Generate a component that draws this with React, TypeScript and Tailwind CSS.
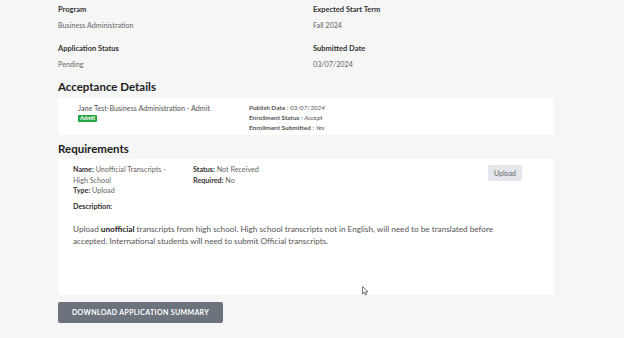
import React from "react";

const font = { fontFamily: "Lato, 'Noto Sans', sans-serif" };

function Field({ label, value }: { label: string; value: string }) {
  return (
    <div className="flex flex-col">
      <div className="text-[7.5px] font-bold leading-[10px] text-[#333]">{label}</div>
      <div className="mt-[6px] text-[7.2px] leading-[10px] text-[#666]">{value}</div>
    </div>
  );
}

export default function App() {
  return (
    <div className="relative w-[624px] h-[338px] bg-[#f6f6f6] overflow-hidden" style={font}>
      <div className="pl-[58px] pr-[70px] pt-[5px]">
        <div className="grid grid-cols-[255px_1fr] gap-y-[13px]">
          <Field label="Program" value="Business Administration" />
          <Field label="Expected Start Term" value="Fall 2024" />
          <Field label="Application Status" value="Pending" />
          <Field label="Submitted Date" value="03/07/2024" />
        </div>

        <h2 className="mt-[10px] text-[11.5px] font-bold leading-[14px] text-[#222]">Acceptance Details</h2>
        <div className="mt-[4px] bg-white w-[496px] h-[37px] flex pl-[20px] pt-[6px]">
          <div className="w-[171px]">
            <div className="text-[7.2px] leading-[10px] text-[#555]">Jane Test-Business Administration - Admit</div>
            <div className="w-fit mt-[1px] bg-[#28a745] text-white text-[5.5px] font-bold leading-[7px] px-[2px] rounded-[1px]">Admit</div>
          </div>
          <div className="-mt-[1px] text-[6.4px] leading-[10px] text-[#555]">
            <div><span className="font-bold">Publish Date</span> : <span className="italic">03/07/2024</span></div>
            <div><span className="font-bold">Enrollment Status</span> : <span className="italic">Accept</span></div>
            <div><span className="font-bold">Enrollment Submitted</span> : <span className="italic">Yes</span></div>
          </div>
        </div>

        <h2 className="mt-[7px] text-[11.5px] font-bold leading-[14px] text-[#222]">Requirements</h2>
        <div className="mt-[3px] bg-white w-[496px] h-[136px] pl-[15px] pr-[32px] pt-[6px]">
          <div className="flex">
            <div className="w-[120px] text-[7.2px] leading-[10.5px] text-[#666]">
              <div><span className="font-bold text-[#333]">Name:</span> Unofficial Transcripts -</div>
              <div>High School</div>
              <div><span className="font-bold text-[#333]">Type:</span> Upload</div>
            </div>
            <div className="flex-1 text-[7.2px] leading-[10.5px] text-[#666]">
              <div><span className="font-bold text-[#333]">Status:</span> Not Received</div>
              <div><span className="font-bold text-[#333]">Required:</span> No</div>
            </div>
            <div className="bg-[#e4e7eb] text-[#666] text-[7px] leading-[16px] h-[16px] px-[6px] rounded-[2px]">Upload</div>
          </div>
          <div className="mt-[5px] text-[7.2px] font-bold leading-[10px] text-[#333]">Description:</div>
          <p className="mt-[11px] text-[8.2px] leading-[12.5px] text-[#555]">
            Upload <b className="text-[#222]">unofficial</b> transcripts from high school. High school transcripts not in English, will need to be translated before accepted. International students will need to submit Official transcripts.
          </p>
        </div>

        <button className="mt-[7px] w-[165px] h-[21px] bg-[#6c737c] rounded-[2px] text-white text-[7px] font-bold tracking-[0.35px] uppercase">
          Download Application Summary
        </button>
      </div>

      <svg className="absolute left-[362px] top-[286px]" width="7" height="10" viewBox="0 0 7 10">
        <path d="M0.5 0.5 L0.5 8 L2.3 6.3 L3.5 9 L4.6 8.5 L3.4 5.9 L6 5.9 Z" fill="#fff" stroke="#555" strokeWidth="0.8" strokeLinejoin="round" />
      </svg>
    </div>
  );
}
